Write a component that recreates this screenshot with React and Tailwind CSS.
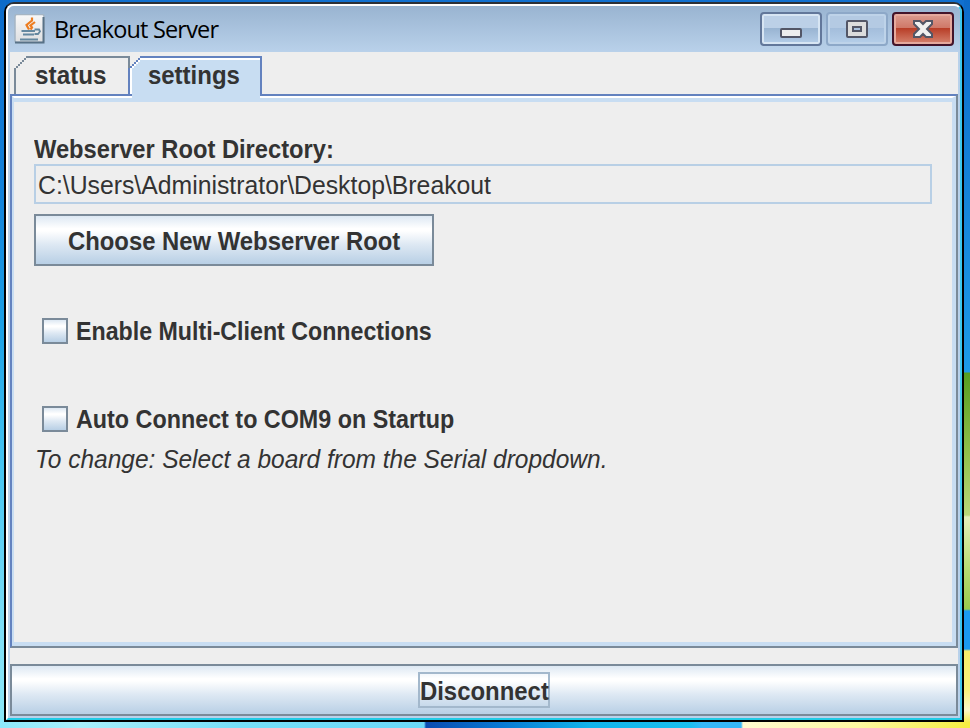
import React from "react";

const LABEL = "inline-block whitespace-nowrap font-['Liberation_Sans',Arial,sans-serif] text-[25px] leading-7 text-[#333]";
const METAL = "bg-[linear-gradient(to_bottom,#dde8f3_0%,#ffffff_26%,#ffffff_31%,#dde8f3_60%,#b8cfe5_100%)]";

function JavaIcon() {
  return (
    <svg className="h-[30px] w-8 shrink-0" viewBox="0 0 32 30">
      <defs>
        <linearGradient id="ji" x1="0" y1="0" x2="0" y2="1">
          <stop offset="0" stopColor="#f8f8f8" />
          <stop offset="1" stopColor="#dddfe1" />
        </linearGradient>
      </defs>
      <rect x="1" y="0.5" width="29" height="28" rx="2" fill="url(#ji)" stroke="#a5b5c3" strokeWidth="1.5" />
      <path d="M1 28.5H29.5V3" fill="none" stroke="#587287" strokeWidth="2" />
      <path d="M18 3.5v3l-5.5 4.5 2.5 4.500M21 8l-4.500 3.500 1.500 2-1.500 2" fill="none" stroke="#ed7d20" strokeWidth="2.200" />
      <path d="M7.500 17H21M9 20.500H20M6 25.500H24M20.500 15.500H25L26 17.500L24 20H20.500" fill="none" stroke="#6488a0" strokeWidth="1.800" />
    </svg>
  );
}

function Notch({ color, inner, fill }) {
  return (
    <svg className="absolute -left-0.5 -top-0.5 h-[14px] w-[14px]" viewBox="0 0 14 14" shapeRendering="crispEdges">
      <path d="M0 0H12V2H10V4H8V6H6V8H4V10H2V12H0Z" fill="#eee" />
      <path d="M12 0h2v2h-2zM10 2h2v2h-2zM8 4h2v2h-2zM6 6h2v2h-2zM4 8h2v2h-2zM2 10h2v2h-2zM0 12h2v2h-2z" fill={color} />
      <path d="M12 2h2v2h-2zM10 4h2v2h-2zM8 6h2v2h-2zM6 8h2v2h-2zM4 10h2v2h-2zM2 12h2v2h-2z" fill={inner} />
      <path d="M12 4h2v10H4v-2h2v-2h2V8h2V6h2z" fill={fill} />
    </svg>
  );
}

function CaptionButtons() {
  return (
    <div className="flex gap-1">
      <div className="flex h-[34px] w-[62px] items-end justify-center rounded-[4px] border-2 border-[#62779a] bg-[linear-gradient(to_bottom,#bcd0e7_0_46%,#98b3d1_46%,#b5cee9_100%)] pb-[6px] shadow-[inset_0_0_0_2px_#d7e5f3]">
        <svg className="h-[10px] w-[22px]" viewBox="0 0 22 10">
          <rect x="1" y="1" width="20" height="8" rx="1" fill="#eee" stroke="#535666" strokeWidth="2" />
        </svg>
      </div>
      <div className="flex h-[34px] w-[62px] items-end justify-center rounded-[4px] border-2 border-[#8da8c8] bg-[linear-gradient(to_bottom,#b4cae3_0_46%,#a3bddb_46%,#b6cfe9_100%)] pb-[6px] shadow-[inset_0_0_0_2px_#bed3e9]">
        <svg className="h-[18px] w-[22px]" viewBox="0 0 22 18">
          <rect x="1" y="1" width="20" height="16" rx="1" fill="#dcdcdc" stroke="#535666" strokeWidth="2" />
          <rect x="7" y="7" width="8" height="4" fill="#a9c2df" stroke="#535666" strokeWidth="2" />
        </svg>
      </div>
      <div className="flex h-[34px] w-[62px] items-end justify-center rounded-[4px] border-2 border-[#43142a] bg-[linear-gradient(to_bottom,#dc9d91_0%,#cf7868_46%,#b73b25_46%,#d68470_100%)] pb-[6px] shadow-[inset_0_0_0_2px_#e5a99d]">
        <svg className="h-[18px] w-[22px]" viewBox="0 0 22 18">
          <path d="M2 1h6l3 3 3-3h6v3l-5 5 5 5v3h-6l-3-3-3 3H2v-3l5-5-5-5z" fill="#f0f0f0" stroke="#535666" strokeWidth="2" />
        </svg>
      </div>
    </div>
  );
}

function Check({ children, fit }) {
  return (
    <div className="flex h-[26px] items-center gap-2">
      <span className={"h-[26px] w-[26px] shrink-0 border-2 border-[#7a8a99] " + METAL} />
      <span className={LABEL + " origin-left font-bold " + fit}>{children}</span>
    </div>
  );
}

export default function App() {
  return (
    <div className="flex h-[728px] w-[970px] flex-col overflow-hidden bg-[#1070d0]">
      <div className="flex h-[722px]">
        <div className="w-[10px] shrink-0 -mr-[6px] bg-[linear-gradient(to_bottom,#0d6bc9_0%,#1483da_27%,#1ca0e5_45%,#48c6f2_65%,#80dff6_88%,#8ce7f8_100%)]" />
        <div className="relative mt-0.5 flex w-[960px] shrink-0 flex-col rounded-t-[10px] border-2 border-black border-t-[#2c3036] bg-[#b9d1ea]">
          <div className="flex grow flex-col rounded-t-[8px] border-2 border-b-[#22cbe6] border-l-white border-r-[#3cc8ee] border-t-white bg-[#b9d1ea] px-0.5 pb-0.5">
            <header className="-mx-0.5 flex h-[46px] shrink-0 items-start rounded-t-[6px] bg-[linear-gradient(to_bottom,#99b4d1,#b9d1ea)] pl-[6px] pr-[6px] pt-[6px]">
              <div className="flex grow items-start gap-2 pt-0.5">
                <JavaIcon />
                <span className="whitespace-nowrap font-['Open_Sans','Noto_Sans',sans-serif] text-[23.5px] leading-[30px] tracking-[-0.83px] text-black">Breakout Server</span>
              </div>
              <CaptionButtons />
            </header>
            <main className="flex h-[664px] flex-col bg-[#eee]">
              <nav className="relative z-10 flex h-[42px] shrink-0 items-start pl-1 pt-1">
                <div className="relative flex h-[38px] w-[116px] justify-center border-x-2 border-t-2 border-[#7a8a99] border-r-[#6382bf] pr-1">
                  <Notch color="#7a8a99" inner="#eee" fill="#eee" />
                  <span className={LABEL + " mt-[3px] scale-x-[0.97] pl-px font-bold"}>status</span>
                </div>
                <div className="relative -ml-0.5 flex h-[46px] w-[134px] justify-center border-r-2 border-t-2 border-[#6382bf] bg-[#c8ddf2] pr-0.5 shadow-[inset_0_2px_0_#fff]">
                  <span className="absolute left-0 top-[8px] h-[30px] w-0.5 bg-[#6382bf]" />
                  <span className="absolute left-0 top-[38px] h-[6px] w-1 bg-[linear-gradient(to_bottom,#fff_0_2px,#c8ddf2_2px)]" />
                  <span className="absolute left-0.5 top-[12px] h-[24px] w-0.5 bg-white" />
                  <span className="absolute -right-0.5 top-[38px] h-0.5 w-0.5 bg-white" />
                  <span className="absolute -right-0.5 top-[40px] h-1 w-0.5 bg-[#c8ddf2]" />
                  <span className="absolute left-0 top-[36px] h-0.5 w-1 bg-[#6382bf]" />
                  <div className="absolute left-0.5 top-0 h-0 w-0">
                    <Notch color="#6382bf" inner="#fff" fill="#c8ddf2" />
                  </div>
                  <span className="absolute -top-0.5 left-0 h-3 w-0.5 bg-[#7a8a99]" />
                  <span className={LABEL + " mt-[3px] scale-x-[0.96] pl-0.5 font-bold"}>settings</span>
                </div>
              </nav>
              <section className="flex h-[554px] shrink-0 flex-col border-2 border-b-[#7a8a99] border-l-[#6382bf] border-r-[#7a8a99] border-t-[#6382bf]">
                <div className="flex grow flex-col border-b-4 border-l-2 border-r-4 border-[#c8ddf2] shadow-[inset_0_4px_0_#c8ddf2] border-t-2 border-t-white pl-5 pr-5 pt-[37px]">
                  <span className={LABEL + " mb-px origin-left scale-x-[0.948] self-start font-bold"}>Webserver Root Directory:</span>
                  <div className="flex h-10 items-center border-2 border-[#b8cfe5] pl-0.5 pt-0.5">
                    <span className={LABEL + " origin-left scale-x-[0.991]"}>C:\Users\Administrator\Desktop\Breakout</span>
                  </div>
                  <button className={"mt-[10px] flex h-[52px] w-[400px] items-center justify-center border-2 border-[#7a8a99] pt-0.5 " + METAL}>
                    <span className={LABEL + " scale-x-[0.954] font-bold"}>Choose New Webserver Root</span>
                  </button>
                  <div className="mt-[52px] flex flex-col gap-[62px] pl-2">
                    <Check fit="scale-x-[0.928]">Enable Multi-Client Connections</Check>
                    <Check fit="scale-x-[0.933]">Auto Connect to COM9 on Startup</Check>
                  </div>
                  <span className={LABEL + " ml-px mt-[13px] origin-left scale-x-[0.98] self-start italic"}>To change: Select a board from the Serial dropdown.</span>
                </div>
              </section>
              <button className={"mt-4 flex h-[52px] shrink-0 items-center justify-center border-2 border-[#7a8a99] " + METAL}>
                <span className="flex h-9 w-[132px] items-center justify-center border-2 border-[#a3b8cc] pt-0.5">
                  <span className={LABEL + " scale-x-[0.957] font-bold"}>Disconnect</span>
                </span>
              </button>
            </main>
          </div>
        </div>
        <div className="w-[6px] shrink-0 bg-[linear-gradient(to_bottom,#0d6bc9_0px,#1d9ae8_372px,#559d20_373px,#8fbe48_450px,#b9d878_515px,#e4efba_517px,#b6db70_570px,#9acb4c_609px,#1b9af0_611px,#1b9af0_649px,#f6ee68_651px,#f8f27c_690px,#fbf8c8_710px,#f5ec50_722px)]" />
      </div>
      <div className="h-[6px] shrink-0 bg-[linear-gradient(to_right,#8de8fa_0px,#a8effb_80px,#76dff8_240px,#6bd8f7_424px,#0a4bb0_426px,#0878d2_500px,#12b4ea_590px,#1bbfee_690px,#35b8f8_702px,#35b8f8_741px,#fffbd0_743px,#fdf8a0_860px,#f5ee40_970px)]" />
    </div>
  );
}
